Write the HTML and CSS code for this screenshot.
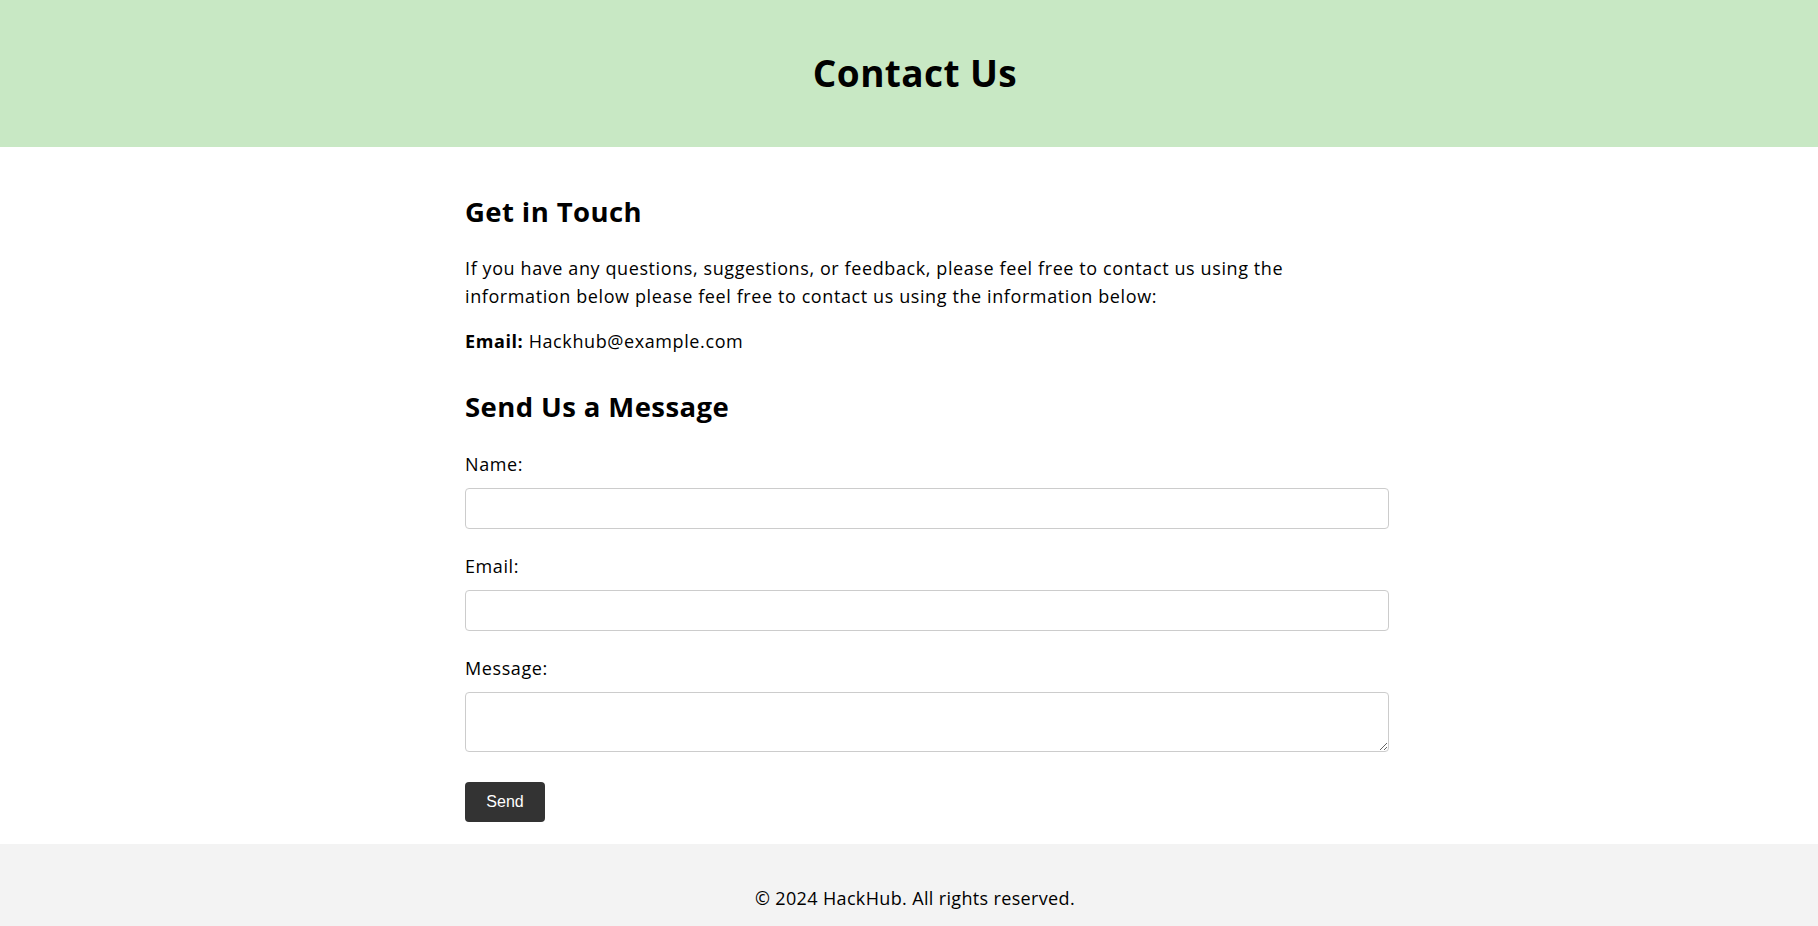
FILE: index.html
```html
<!DOCTYPE html>
<html lang="en">
<head>
<meta charset="utf-8">
<title>Contact Us - HackHub</title>
<link rel="stylesheet" href="styles.css">
</head>
<body>
<header class="site-header">
  <h1 class="page-title">Contact Us</h1>
</header>
<main class="content">
  <section class="info">
    <h2 class="section-title">Get in Touch</h2>
    <p class="lead">If you have any questions, suggestions, or feedback, please feel free to contact us using the information below please feel free to contact us using the information below:</p>
    <p class="email-line"><strong>Email:</strong> Hackhub@example.com</p>
  </section>
  <section class="form-section">
    <h2 class="section-title">Send Us a Message</h2>
    <form class="contact-form">
      <label class="field-label" for="name">Name:</label>
      <input class="field-input" type="text" id="name">
      <label class="field-label" for="email">Email:</label>
      <input class="field-input" type="email" id="email">
      <label class="field-label" for="message">Message:</label>
      <textarea class="field-input field-textarea" id="message"></textarea>
      <button class="send-btn" type="button">Send</button>
    </form>
  </section>
</main>
<footer class="site-footer">
  <p class="footer-text">© 2024 HackHub. All rights reserved.</p>
</footer>
</body>
</html>
```
FILE: styles.css
```css
* { box-sizing: border-box; }
body {
  margin: 0;
  font-family: "Open Sans", "DejaVu Sans", sans-serif;
  color: #000;
  background: #fff;
}
.site-header {
  background: #c8e8c4;
  height: 147px;
  padding-left: 12px;
  display: flex;
  align-items: center;
  justify-content: center;
}
.page-title {
  margin: 0;
  font-size: 37px;
  font-weight: 700;
  line-height: 1.2;
  letter-spacing: 0.4px;
}
.content {
  width: 888px;
  margin: 0 auto;
  padding-top: 49px;
  padding-bottom: 22px;
}
.section-title {
  margin: 0;
  font-size: 27.5px;
  font-weight: 700;
  line-height: 31px;
  letter-spacing: 0.4px;
}
.lead {
  margin: 27px 0 0;
  font-size: 18px;
  line-height: 28px;
  letter-spacing: 0.6px;
}
.email-line {
  margin: 17px 0 0;
  font-size: 18px;
  line-height: 28px;
  letter-spacing: 0.6px;
}
.form-section { margin-top: 36px; }
.contact-form {
  display: flex;
  flex-direction: column;
  align-items: flex-start;
  margin-top: 28px;
}
.field-label {
  font-size: 18px;
  line-height: 28px;
  letter-spacing: 0.6px;
  margin-bottom: 10px;
}
.field-input {
  width: calc(100% + 36px);
  height: 41px;
  border: 1px solid #ccc;
  border-radius: 4px;
  padding: 10px;
  margin-bottom: 23px;
  font-family: inherit;
  font-size: 16px;
}
.field-textarea {
  height: 60px;
  margin-bottom: 30px;
  resize: vertical;
}
.send-btn {
  background: #333;
  color: #fff;
  border: none;
  border-radius: 4px;
  width: 80px;
  height: 40px;
  font-family: "Liberation Sans", Arial, sans-serif;
  font-size: 16px;
  cursor: pointer;
}
.site-footer {
  background: #f3f3f3;
  padding: 40px 0 40px 12px;
  text-align: center;
}
.footer-text {
  margin: 0;
  font-size: 18px;
  line-height: 28px;
  letter-spacing: 0.35px;
}
```
